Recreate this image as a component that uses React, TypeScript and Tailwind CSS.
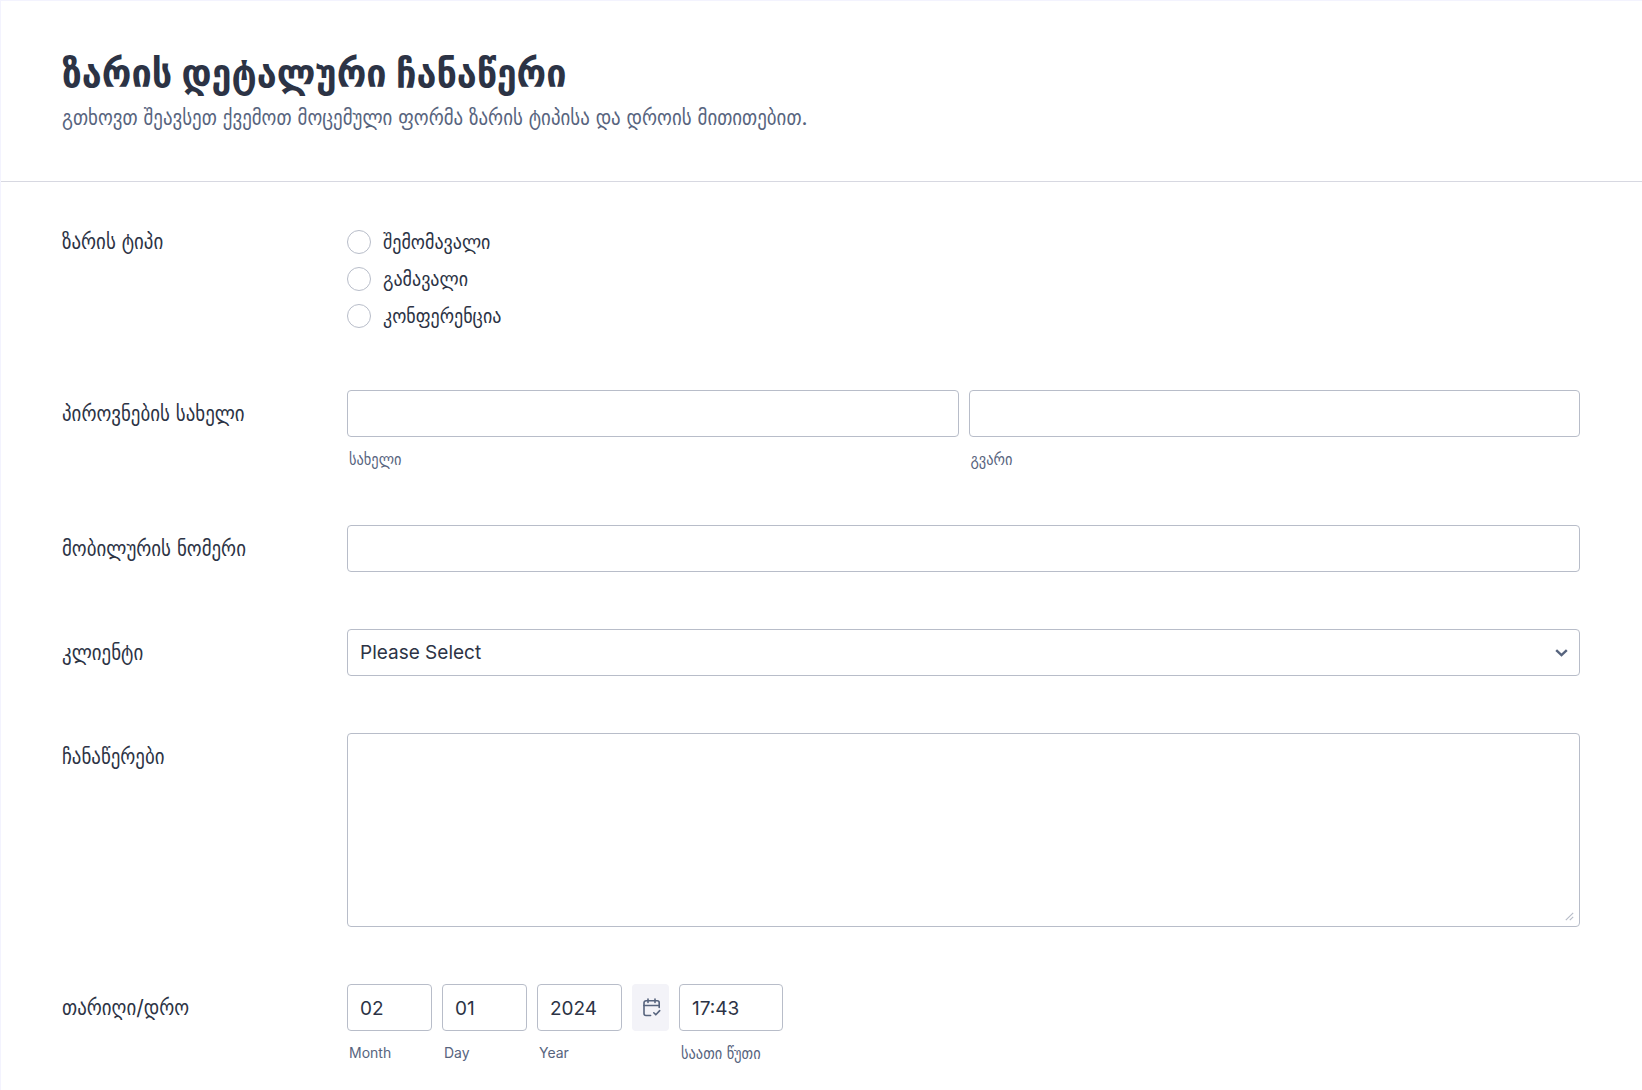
import { useState } from 'react';
import type { ReactNode } from 'react';

const CALL_TYPES = ['შემომავალი', 'გამავალი', 'კონფერენცია'];

const inputClass =
  'block h-[47px] w-full rounded border border-[#b8bdc9] bg-white px-3 pt-0.5 text-[19px] text-[#2c3345] outline-none focus:border-blue-500';

interface FormRowProps {
  label: string;
  htmlFor: string;
  children: ReactNode;
}

const FormRow = ({ label, htmlFor, children }: FormRowProps) => (
  <div className="grid grid-cols-[285px_minmax(0,1fr)]">
    <label htmlFor={htmlFor} className="h-[47px] text-[21px] leading-[47px]">
      {label}
    </label>
    <div>{children}</div>
  </div>
);

interface SubFieldProps {
  id: string;
  label: string;
  className?: string;
  labelClass?: string;
  defaultValue?: string;
}

const SubField = ({ id, label, className, labelClass = 'text-[14px]', defaultValue }: SubFieldProps) => (
  <div className={className}>
    <input id={id} type="text" defaultValue={defaultValue} className={inputClass} />
    <label htmlFor={id} className={`mt-3 block h-[19px] pl-0.5 leading-[20px] whitespace-nowrap text-[#57647e] ${labelClass}`}>
      {label}
    </label>
  </div>
);

const CalendarCheckIcon = () => (
  <svg width="18" height="19" viewBox="0 0 18 19" fill="none" stroke="currentColor" strokeWidth="1.6" strokeLinecap="round" strokeLinejoin="round" aria-hidden="true">
    <path d="M16.2 9.5V4.8a2 2 0 0 0-2-2H3a2 2 0 0 0-2 2v10.7a2 2 0 0 0 2 2h4.6" />
    <path d="M1 7.5h15.2M5 1v3.5M12 1v3.5" />
    <path d="m10.8 14.8 2 2 3.9-4.2" />
  </svg>
);

const App = () => {
  const [callType, setCallType] = useState('');

  return (
    <div className="min-h-screen border-t border-l border-[#f3f3fe] bg-white font-['Inter','DejaVu_Sans_Condensed','DejaVu_Sans',sans-serif] text-[#2c3345]">
      <header className="border-b border-[#d7d8e1] px-[61px] pt-[46px] pb-[50px]">
        <h1 className="text-[40px] leading-[52px] font-bold">ზარის დეტალური ჩანაწერი</h1>
        <p className="mt-1.5 text-[21px] leading-[26px] text-[#57647e]">
          გთხოვთ შეავსეთ ქვემოთ მოცემული ფორმა ზარის ტიპისა და დროის მითითებით.
        </p>
      </header>

      <form className="flex flex-col gap-[57px] pt-9 pr-[62px] pb-[21px] pl-[61px]" onSubmit={e => e.preventDefault()}>
        <div role="radiogroup" aria-labelledby="call-type-label" className="grid grid-cols-[285px_minmax(0,1fr)]">
          <span id="call-type-label" className="h-[47px] text-[21px] leading-[47px]">
            ზარის ტიპი
          </span>
          <div className="flex flex-col gap-[13px] pt-3 pb-[5px]">
            {CALL_TYPES.map(type => (
              <label key={type} className="flex h-6 items-center gap-3 text-[20px] leading-[22px]">
                <input
                  type="radio"
                  name="callType"
                  value={type}
                  checked={callType === type}
                  onChange={() => setCallType(type)}
                  className="size-6 appearance-none rounded-full border border-[#b8bdc9] bg-white checked:border-[7px] checked:border-blue-500"
                />
                {type}
              </label>
            ))}
          </div>
        </div>

        <FormRow label="პიროვნების სახელი" htmlFor="first-name">
          <div className="grid grid-cols-2 gap-2.5">
            <SubField id="first-name" label="სახელი" labelClass="text-[16px]" />
            <SubField id="last-name" label="გვარი" labelClass="text-[16px]" />
          </div>
        </FormRow>

        <FormRow label="მობილურის ნომერი" htmlFor="phone">
          <input id="phone" type="tel" className={inputClass} />
        </FormRow>

        <FormRow label="კლიენტი" htmlFor="client">
          <div className="relative">
            <select id="client" className={`${inputClass} appearance-none`}>
              <option>Please Select</option>
            </select>
            <svg className="pointer-events-none absolute top-5 right-3" width="13" height="8" viewBox="0 0 13 8" fill="none" stroke="#57647e" strokeWidth="2.4" aria-hidden="true">
              <path d="m1.2 1.2 5.3 5 5.3-5" />
            </svg>
          </div>
        </FormRow>

        <FormRow label="ჩანაწერები" htmlFor="notes">
          <div className="relative">
            <textarea id="notes" className={`${inputClass} h-[194px] resize-none py-2`} />
            <svg className="pointer-events-none absolute right-1.5 bottom-1.5" width="9" height="9" viewBox="0 0 9 9" stroke="#b8bdc9" strokeWidth="1.2" aria-hidden="true">
              <path d="M.8 8.2 8.2.8M4.8 8.2l3.4-3.4" />
            </svg>
          </div>
        </FormRow>

        <FormRow label="თარიღი/დრო" htmlFor="month">
          <div className="flex gap-2.5">
            <SubField id="month" label="Month" defaultValue="02" className="w-[85px]" />
            <SubField id="day" label="Day" defaultValue="01" className="w-[85px]" />
            <SubField id="year" label="Year" defaultValue="2024" className="w-[85px]" />
            <button
              type="button"
              aria-label="Choose date"
              className="flex h-[47px] w-[37px] items-center justify-center rounded bg-[#f3f3f8] pl-0.5 text-[#57647e]"
            >
              <CalendarCheckIcon />
            </button>
            <SubField id="time" label="საათი წუთი" defaultValue="17:43" className="w-[104px]" labelClass="text-[16px]" />
          </div>
        </FormRow>
      </form>
    </div>
  );
};

export default App;
